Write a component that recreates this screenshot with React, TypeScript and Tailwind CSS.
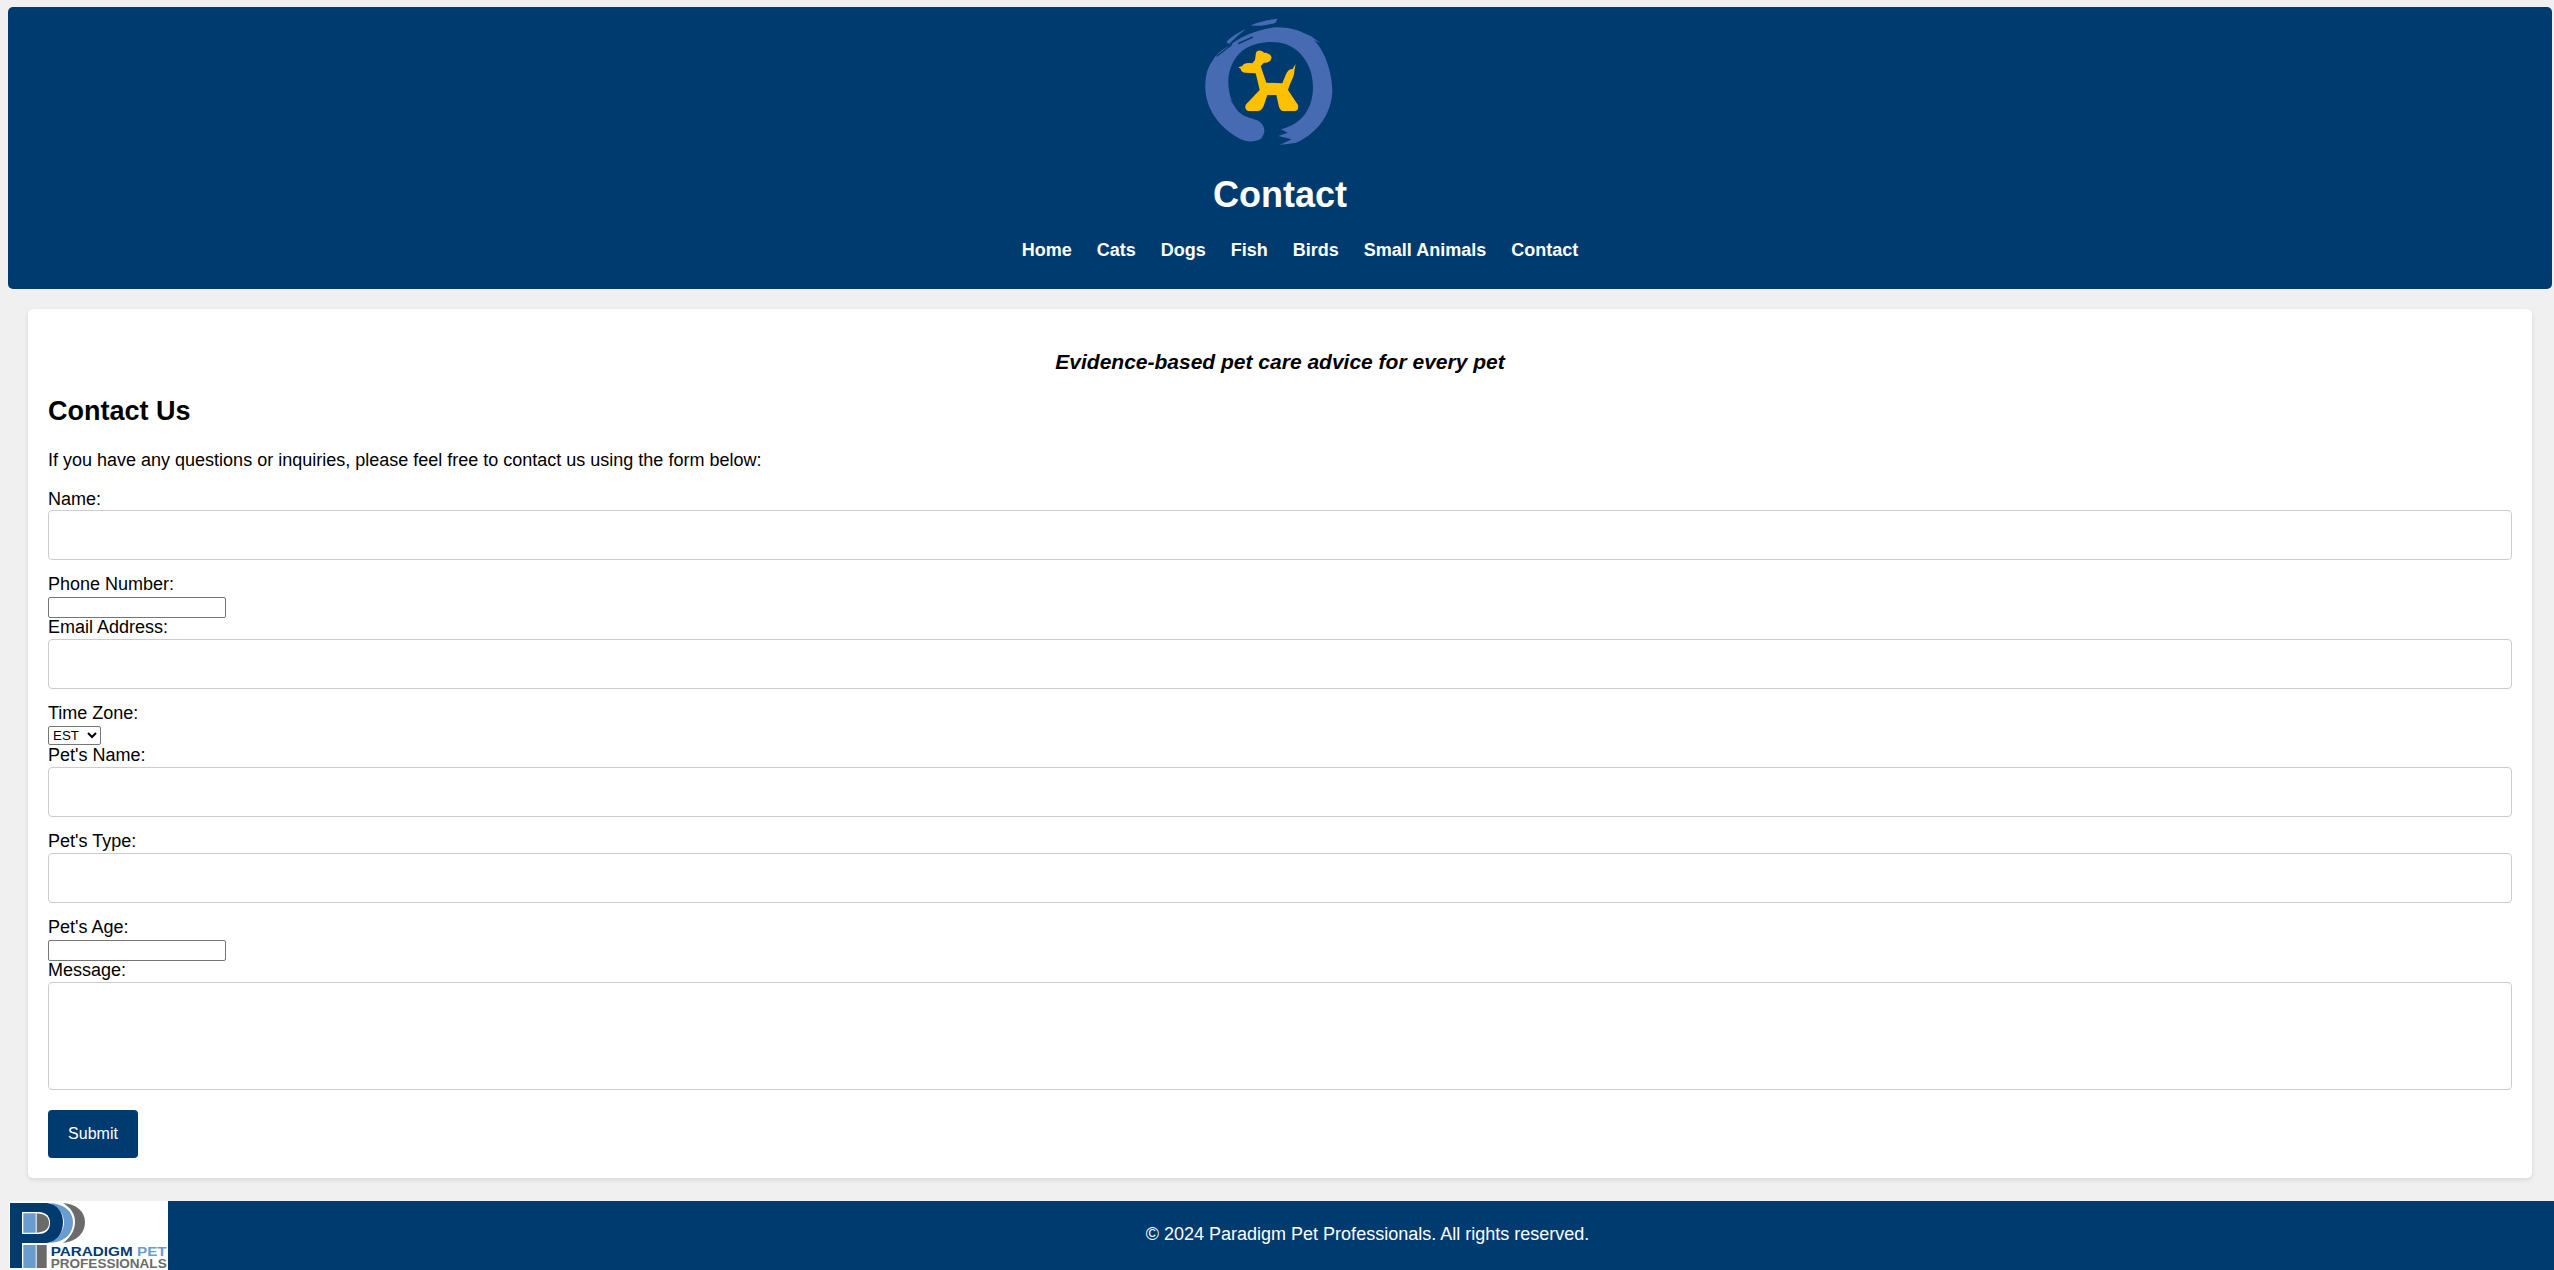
import React from "react";

function DogLogo() {
  return (
    <svg width="150" height="140" viewBox="0 0 450 420" className="block">
      <g fill="#476bb2">
        <path d="M50 250C46 215 52 175 72 150C82 132 100 118 120 108C150 84 200 58 262 52C310 52 345 64 372 88C405 118 428 180 430 240C430 300 395 365 322 398L272 405L308 388L268 378L296 368L276 358C340 342 372 295 372 232C372 172 342 124 292 103C252 90 205 96 172 114C140 132 120 170 118 210C117 255 132 292 158 313C178 326 198 326 210 334C228 346 232 368 216 386C198 397 172 396 155 388C108 362 60 320 50 250Z" />
        <path d="M185 46C205 36 240 29 265 26L260 38C238 46 208 50 185 46Z" />
        <path d="M112 96C125 82 150 66 170 58L148 76L120 102Z" />
        <path d="M325 62L365 78L395 100L352 80Z" />
      </g>
      <g stroke="#003b6f" fill="none" strokeLinecap="round">
        <path d="M84 138L128 104" strokeWidth="4" />
        <path d="M150 100L190 82" strokeWidth="5" />
        <path d="M125 270L150 305" strokeWidth="2" />
        <path d="M345 300L365 250" strokeWidth="2" />
      </g>
      <path
        fill="#ffc000"
        d="M148 172L160 168C165 158 175 158 190 160L198 150L200 135C200 120 215 118 225 128C235 128 250 135 247 145C245 155 235 160 225 158L215 168L232 218L280 220L290 195C295 182 305 175 310 178L320 162L316 182C318 195 305 215 297 240L327 285C330 300 322 303 315 303L285 303C275 303 272 295 270 290L262 255L235 255L225 285C220 300 212 303 205 303L180 303C170 303 165 290 172 282L212 240L205 210L200 190L170 188C160 188 155 182 155 176Z"
      />
    </svg>
  );
}

function PpLogo() {
  const f = "'Liberation Sans', sans-serif";
  return (
    <svg width="159" height="69" viewBox="0 0 159 69" className="block shrink-0 bg-white">
      <path d="M54 2C68 3 76 11 76 21C76 32 68 40 54 42C62 36 66 29 66 21C66 13 62 7 54 2Z" fill="#6b6b6b" />
      <path d="M41 2C56 3 64 11 64 21C64 33 56 41 41 42C49 38 55 30 55 21C55 13 49 6 41 2Z" fill="#699ccf" />
      <path d="M1 2H38C48 3 54 11 54 21C54 33 47 41 38 42H13V67H1Z" fill="#003b6f" />
      <path d="M13 11H29C38 11 41 16 41 22C41 28 38 33 29 33H13Z" fill="#fff" />
      <path d="M14.3 12.3H26.7V31.7H14.3Z" fill="#699ccf" />
      <path d="M27.7 12.3C37 13 40 17 40 22C40 27 37 31 27.7 31.7Z" fill="#6b6b6b" />
      <path d="M14.3 44H26.7V67H14.3Z" fill="#699ccf" />
      <path d="M27.7 44H37.7V67H27.7Z" fill="#6b6b6b" />
      <text x="41.7" y="55" fontFamily={f} fontWeight="700" fontSize="13" fill="#003b6f" textLength="116" lengthAdjust="spacingAndGlyphs">
        PARADIGM <tspan fill="#699ccf">PET</tspan>
      </text>
      <text x="41.7" y="66.7" fontFamily={f} fontWeight="700" fontSize="13" fill="#6b6b6b" textLength="116" lengthAdjust="spacingAndGlyphs">
        PROFESSIONALS
      </text>
    </svg>
  );
}

const label = "block h-[18px] leading-[18px] text-[18px] text-black";
const wide = "block w-full h-[50px] rounded-[4px] border border-[#ccc] bg-white mb-[15px] mt-[3px]";
const small = "block w-[178px] h-[21px] mt-[4px] rounded-[2px] border border-[#767676] bg-white";

export default function App() {
  const nav = ["Home", "Cats", "Dogs", "Fish", "Birds", "Small Animals", "Contact"];
  return (
    <div className="min-h-[1270px] bg-[#f0f0f0] font-['Liberation_Sans',Arial,sans-serif] pt-[7px] flex flex-col">
      <header className="ml-[8px] mr-[2px] h-[282px] rounded-[5px] bg-[#003b6f] text-white flex flex-col items-center">
        <div className="mt-[3px] mr-[32px]"><DogLogo /></div>
        <h1 className="mt-[24px] text-[36px] leading-[41px] font-bold">Contact</h1>
        <nav className="mt-[25px] ml-[40px] flex gap-[25px] text-[18px] leading-[20px] font-bold">
          {nav.map((n) => (
            <a key={n}>{n}</a>
          ))}
        </nav>
      </header>
      <main className="ml-[28px] mr-[22px] mt-[20px] h-[869px] rounded-[5px] bg-white shadow-[0_2px_5px_rgba(0,0,0,0.1)] px-[20px] pt-[41px]">
        <p className="text-center italic font-bold text-[21px] leading-[24px] text-black">Evidence-based pet care advice for every pet</p>
        <h2 className="mt-[21px] text-[27px] leading-[32px] font-bold text-black">Contact Us</h2>
        <p className="mt-[24px] text-[18px] leading-[18px] text-black">If you have any questions or inquiries, please feel free to contact us using the form below:</p>
        <form className="mt-[21px]">
          <label className={label}>Name:</label>
          <input className={`${wide} !mt-[2px]`} />
          <label className={label}>Phone Number:</label>
          <input className={small} />
          <label className={label}>Email Address:</label>
          <input className={wide} />
          <label className={label}>Time Zone:</label>
          <select className="block mt-[4px] mb-[1px] h-[19px] w-[53px] rounded-[2px] border border-[#767676] bg-white text-[13.33px] leading-[15px] text-black" defaultValue="EST" style={{ appearance: "auto" }}>
            <option>EST</option>
          </select>
          <label className={label}>Pet's Name:</label>
          <input className={wide} />
          <label className={label}>Pet's Type:</label>
          <input className={wide} />
          <label className={label}>Pet's Age:</label>
          <input className={small} />
          <label className={label}>Message:</label>
          <textarea className="block w-full h-[108px] mt-[3px] rounded-[4px] border border-[#ccc] bg-white resize-none" />
          <button type="button" className="block mt-[20px] w-[90px] h-[48px] rounded-[4px] bg-[#003b6f] text-white text-[16px]">Submit</button>
        </form>
      </main>
      <footer className="mt-[23px] ml-[9px] h-[69px] bg-[#003b6f] text-white flex">
        <PpLogo />
        <p className="flex-1 text-center text-[18px] leading-[20px] pt-[23px] pl-[13px]">© 2024 Paradigm Pet Professionals. All rights reserved.</p>
      </footer>
    </div>
  );
}
